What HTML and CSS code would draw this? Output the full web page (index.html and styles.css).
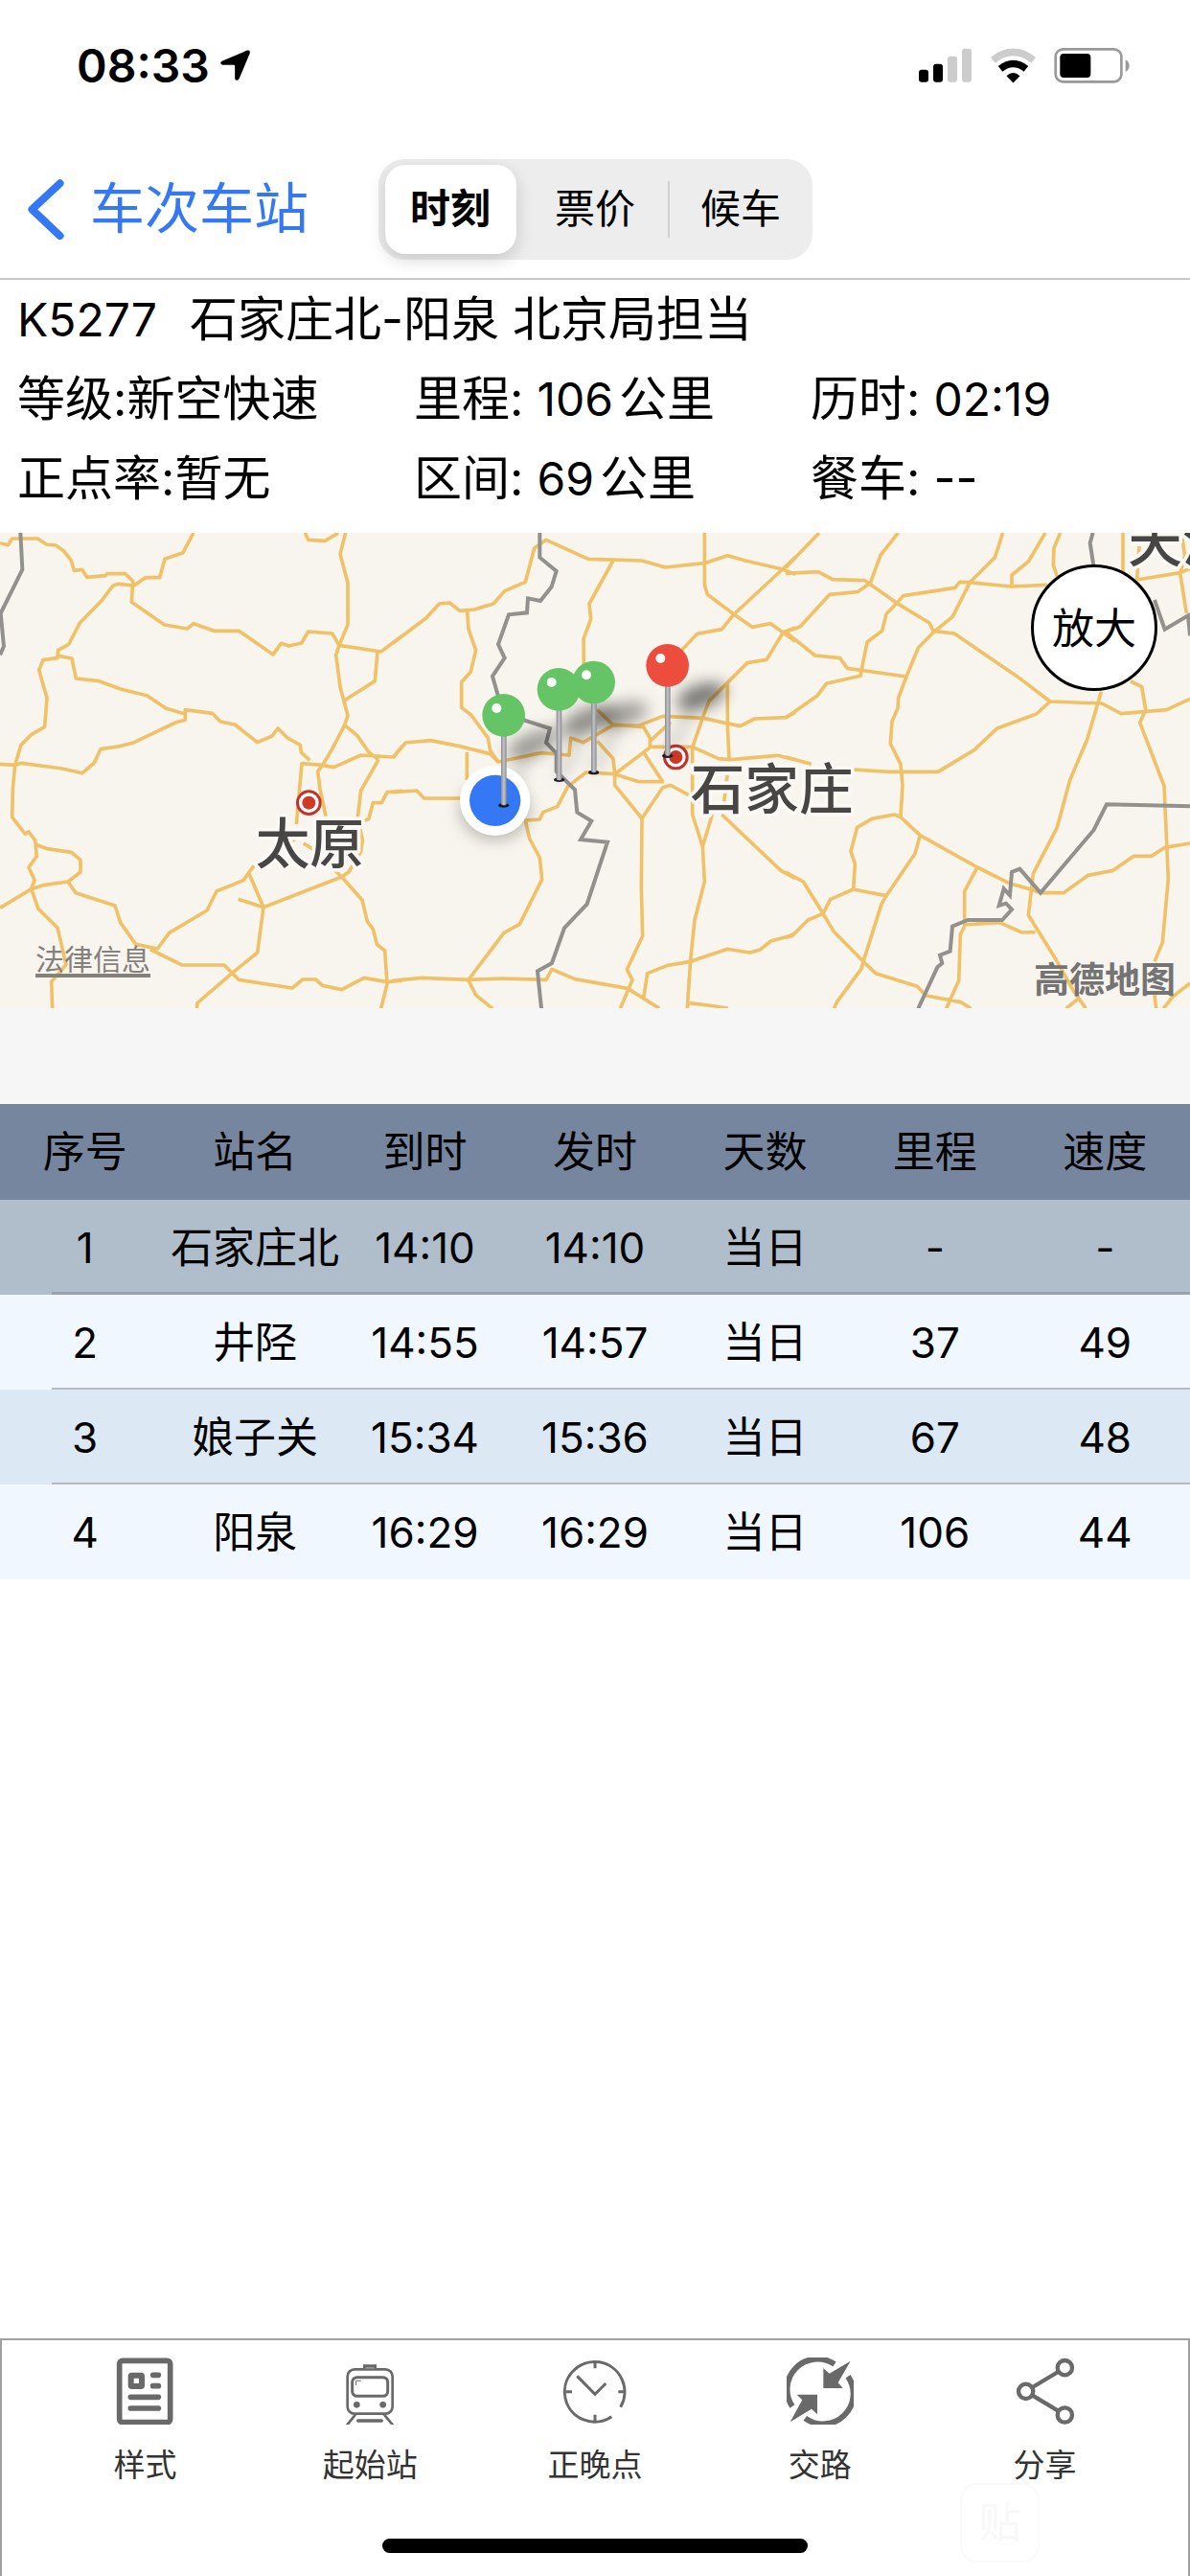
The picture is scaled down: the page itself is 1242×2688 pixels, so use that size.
FILE: index.html
```html
<!DOCTYPE HTML>
<html lang="zh-CN">
<head>
<meta charset="utf-8">
<meta name="viewport" content="width=device-width, initial-scale=1">
<title>K5277 石家庄北-阳泉</title>
<link rel="stylesheet" href="styles.css">
</head>

<body>
<div class="status">
	<span class="time">08:33</span>
	<svg class="loc" viewBox="686 60 100 102"><path d="M694 98L772 65Q785 61 782 74L749 153Q745 161 738 158Q735 156 735 151V113Q735 110 731 110H696Q689 109 690 103Q691 100 694 98Z"/></svg>
	<div class="status-right">
		<svg class="signal" viewBox="171 58 168 110">
			<rect x="171" y="126" width="30" height="39" rx="9"/>
			<rect x="216" y="108" width="30" height="57" rx="9"/>
			<rect x="261" y="84" width="30" height="81" rx="9" fill="#ccc"/>
			<rect x="306" y="60" width="30" height="105" rx="9" fill="#ccc"/>
		</svg>
		<svg class="wifi" viewBox="394 57 146 110">
			<path d="M404 95Q467 45 530 95" fill="none" stroke="#ccc" stroke-width="22"/>
			<path d="M427 122Q467 90 507 122" fill="none" stroke="#000" stroke-width="22"/>
			<path d="M446 144Q467 125 488 144L467 166Z"/>
		</svg>
		<svg class="battery" viewBox="597 57 240 112">
			<rect x="601" y="61" width="208" height="103" rx="24" fill="none" stroke="#999" stroke-width="8"/>
			<rect x="615" y="75" width="97" height="76" rx="12"/>
			<path d="M822 94Q834 100 834 113T822 132Z" fill="#999"/>
		</svg>
	</div>
</div>

<nav class="nav">
	<a class="back" href="#">
		<svg viewBox="88 468 114 190"><path d="M189 481L101 563L189 646"/></svg>
		<span>车次车站</span>
	</a>
	<div class="seg">
		<button class="on" type="button">时刻</button>
		<button type="button">票价</button>
		<button type="button">候车</button>
	</div>
</nav>

<main>
<div class="info">
	<p class="full"><span class="num no">K5277</span>石家庄北-阳泉 北京局担当</p>
	<p>等级:新空快速</p>
	<p>里程: <span class="num km">106</span>公里</p>
	<p>历时: <span class="num">02:19</span></p>
	<p>正点率:暂无</p>
	<p>区间: <span class="num km">69</span>公里</p>
	<p>餐车: --</p>
</div>

<div class="map">
	<svg class="tiles" viewBox="0 0 3726 1488" preserveAspectRatio="xMidYMid slice">
		<defs>
			<filter id="blur" x="-50%" y="-50%" width="200%" height="200%"><feGaussianBlur stdDeviation="24"/></filter>
			<linearGradient id="rod"><stop offset="0" stop-color="#8a8b8f"/><stop offset=".5" stop-color="#c3c4c8"/><stop offset="1" stop-color="#8a8b8f"/></linearGradient>
		</defs>

		<!-- 西 -->
		<g transform="translate(0 -18)">
			<g class="road">
				<path d="M0 50L25 56L38 36H118L145 54L175 57L200 75L222 103L232 136L257 133L272 157L330 152L335 146H392L415 168L420 183L455 158H500L516 100L573 80L606 18"/>
				<path d="M420 183L372 178L353 184L321 227L250 300L215 367L182 385L180 410L135 416L122 448L147 535L140 625L98 650L66 682L47 745L40 820L38 908L78 960L90 954L110 980L115 1030L90 1065L108 1105L98 1133L120 1195L180 1254L207 1370L161 1423L164 1507"/>
				<path d="M415 183L412 235L515 306L586 318L606 302L670 325H748L855 399L880 364L905 372L944 363L965 327L1040 333L1062 370L1193 390L1260 340"/>
				<path d="M182 403L225 411L238 474L310 482L380 508L460 527L520 568L580 585V604L550 612L415 676L370 687L315 695L295 738L258 770L195 756L150 750L68 739L47 745L0 742"/>
				<path d="M580 585V572L665 583L690 609L735 618L806 674L852 654L870 630L900 660L940 682L943 705L970 730"/>
				<path d="M955 18L965 40L1018 43L1060 18"/>
				<path d="M1082 18L1065 85L1089 175V305L1062 370L1052 400L1065 500L1089 590L1079 620L1040 695L1010 745L945 740L928 930"/>
				<path d="M1182 390L1174 482L1078 543M1079 620L1118 652L1155 705L1185 728M1010 745L1045 752L1130 714L1232 720L1260 685"/>
				<path d="M1185 728L1130 825L1120 910L1135 980L1130 1015L1092 1080L1070 1095L825 1190L746 1165M1140 918L1154 914L1168 863H1195L1212 830L1260 826"/>
				<path d="M1010 745L995 765L1002 820L1020 905M910 985L935 970M950 990L975 1005L1070 1095L1134 1168L1150 1235L1168 1258L1180 1306L1205 1326L1212 1430L1193 1507"/>
				<path d="M110 993L148 1007L224 1018L252 1042V1080L213 1110L135 1121L98 1133L0 1192"/>
				<path d="M213 1110L237 1145L360 1185L377 1238L425 1306L493 1320L530 1270L648 1200L678 1140L762 1106L795 1060M780 1085L825 1190L806 1332L727 1396L618 1490L616 1507"/>
				<path d="M470 1322L570 1371H702L748 1417L915 1443L948 1416H988L1010 1435L1070 1448L1140 1411L1212 1424L1260 1419"/>
			</g>
			<path class="edge" d="M64 18L70 133L2 270L12 373L0 400"/>
		</g>

		<!-- 中 -->
		<g transform="translate(1230 -18)">
			<g class="road">
				<path d="M0 363L104 285L145 240L178 237L210 262L255 258L315 240L350 200L415 172L443 66L480 40L612 100L780 105L853 126L975 113L1048 89L1100 104L1220 132L1260 148"/>
				<path d="M233 262L237 320L260 385L244 453L215 485V565L245 588L298 660L305 700L330 735"/>
				<path d="M690 105L648 180L615 240L620 288L597 350L598 430"/>
				<path d="M976 18V180L985 211L1068 273L1125 313L1183 302L1260 358M1260 95L1220 132L1068 273L1030 320L953 334L905 385"/>
				<path d="M1260 315L1222 330L1170 415L1110 425L1050 485L990 545L970 597L938 690"/>
				<path d="M0 722L40 675L118 668L205 685L305 710L330 735L465 707L552 714L557 660L597 674L690 620L640 572M690 618L785 626L805 660V690M690 620L768 622L845 592L972 598L1088 623L1133 600L1230 596L1260 580M870 610L805 670"/>
				<path d="M232 705V792M0 830L75 825L98 849H215"/>
				<path d="M1048 485V620L1053 728M805 688H938L1020 725L1053 728L1205 715L1260 728"/>
				<path d="M805 690L695 773L605 768L548 812L515 875L470 893L460 915L415 918L428 975L460 1035L467 1103L397 1243L348 1270L236 1418L260 1465L312 1507"/>
				<path d="M640 670L690 725L695 773L770 797H845L785 705M695 773V808L780 912L845 815L870 808L965 860"/>
				<path d="M780 912L778 1130L782 1280L733 1385L750 1418L712 1507"/>
				<path d="M938 690V900L970 1000L976 1110L945 1230L932 1355L922 1507M1000 900L970 1000M1048 770L1037 860M1030 900L1215 1075L1260 1100"/>
				<path d="M0 1420L90 1411L237 1417L340 1413L480 1417L498 1384L570 1415L735 1444L835 1507M785 1475L797 1397L860 1372L932 1360L1048 1321L1118 1332L1150 1323L1185 1295L1240 1281L1260 1270M928 1490L1010 1500L1050 1507"/>
			</g>
			<path class="edge" d="M460 18V95L512 138L497 187L462 231L423 223L420 268L363 274L330 367L350 410L312 467L330 530L413 605L492 630L480 675L512 708V765L570 822L577 893L622 920L588 978L672 986L608 1180L537 1255L498 1365L453 1390L465 1507"/>
		</g>

		<!-- 东 -->
		<g transform="translate(2460 -18)">
			<g class="road">
				<path d="M0 127L105 18M0 145L102 140L147 164L248 167L348 238L450 300L462 325L528 333L735 475L828 546L990 552L1050 584L1193 572L1266 538"/>
				<path d="M352 18L297 88L265 175L225 203L138 211L45 312L0 328L92 402L170 410L193 442L378 468"/>
				<path d="M0 597L100 527L127 490L234 466L255 360L302 325L315 272L348 238L368 215L530 190L545 172L577 173L705 186L820 181"/>
				<path d="M680 18L655 95L577 173L523 280L462 330L415 378L378 468L353 535L351 567L333 608L328 678L360 742L366 808L360 908L421 965L600 1065L700 1115L770 1135L798 1145H870L947 1090L1025 1075L1090 1030H1145L1187 1003L1266 990"/>
				<path d="M813 18L760 108L708 150V190M860 18L840 65L838 118L850 155M1056 18V140M1100 165L1235 143L1266 130M1107 60L1100 165M1235 145L1255 270M1240 25L1250 90L1235 145"/>
				<path d="M0 720L80 742M210 759L325 766H477L590 698L662 630L785 585L828 546"/>
				<path d="M988 515L945 662L890 792L850 940L775 1085L760 1215L850 1360M1080 483L1115 500L1127 572L1109 612L1185 810L1198 1100L1180 1300L1155 1360M1155 1465L1160 1507M1183 1507L1212 1470L1266 1428"/>
				<path d="M360 908L340 900L270 913L224 940L204 1015L217 1055L212 1134L315 1154M212 1134L140 1165L117 1210L70 1230L20 1280L0 1284M421 965L405 1022L315 1154L300 1180L243 1360L237 1383L160 1487L152 1507"/>
				<path d="M0 1080L55 1110L117 1210L150 1265L243 1360L282 1397L412 1438L440 1467L548 1487L580 1507M600 1065L560 1140V1245L670 1238L740 1269L782 1268M560 1250L547 1275L542 1420L503 1507"/>
				<path d="M850 1360L900 1450L940 1507M918 1475L878 1507"/>
			</g>
			<path class="edge" d="M962 18L953 50L964 120M1155 228L1187 320L1260 277L1266 340M1266 874L1005 868L965 948L798 1145L733 1070L708 1080L702 1153L683 1132L668 1185L690 1178L708 1197L678 1230H570L522 1250L515 1328L483 1340L490 1365L475 1378L415 1507"/>
		</g>

		<g class="city">
			<circle cx="967" cy="845" r="40" fill="#c2342b"/><circle cx="967" cy="845" r="31" fill="#fff"/><circle cx="967" cy="845" r="21" fill="#d03a26"/>
			<circle cx="2116" cy="702" r="40" fill="#c2342b"/><circle cx="2116" cy="702" r="31" fill="#fff"/><circle cx="2116" cy="702" r="21" fill="#d03a26"/>
			<text x="800" y="1035">太原</text>
			<text x="2162" y="864">石家庄</text>
			<text x="3532" y="90">天津</text>
		</g>

		<!-- 大头针 -->
		<g transform="translate(1230 -18)">
			<g fill="#000" filter="url(#blur)">
				<ellipse cx="320" cy="885" rx="110" ry="95" opacity=".25"/>
				<ellipse cx="440" cy="678" rx="90" ry="36" opacity=".35" transform="rotate(-22 440 678)"/>
				<ellipse cx="610" cy="604" rx="90" ry="38" opacity=".4" transform="rotate(-22 610 604)"/>
				<ellipse cx="720" cy="586" rx="80" ry="36" opacity=".35" transform="rotate(-15 720 586)"/>
				<ellipse cx="965" cy="530" rx="80" ry="38" opacity=".5" transform="rotate(-18 965 530)"/>
				<path d="M350 866L430 690M522 786L600 620M630 764L710 600M862 710L940 560" stroke="#000" stroke-width="34" opacity=".14"/>
			</g>
			<circle cx="320" cy="856" r="110" fill="#fff"/><circle cx="320" cy="856" r="80" fill="#3478f6"/>
			<g fill="#1c1c20">
				<ellipse cx="860" cy="716" rx="17" ry="7"/><ellipse cx="629" cy="768" rx="17" ry="7"/><ellipse cx="521" cy="791" rx="17" ry="7"/><ellipse cx="347" cy="871" rx="17" ry="7"/>
			</g>
			<g fill="url(#rod)">
				<rect x="852" y="490" width="17" height="226" rx="6"/><rect x="621" y="540" width="17" height="228" rx="6"/><rect x="512" y="565" width="17" height="228" rx="6"/><rect x="339" y="645" width="17" height="226" rx="6"/>
			</g>
			<circle cx="860" cy="433" r="67" fill="#ec4d3d"/>
			<g fill="#65c466"><circle cx="629" cy="486" r="67"/><circle cx="519" cy="508" r="67"/><circle cx="347" cy="589" r="67"/></g>
			<g fill="#fff"><circle cx="838" cy="411" r="15"/><circle cx="606" cy="463" r="15"/><circle cx="497" cy="486" r="15"/><circle cx="325" cy="567" r="15"/></g>
		</g>
	</svg>
	<button class="zoom" type="button">放大</button>
	<a class="legal" href="#">法律信息</a>
	<span class="amap">高德地图</span>
</div>

<table class="stops">
	<thead>
		<tr><th>序号</th><th>站名</th><th>到时</th><th>发时</th><th>天数</th><th>里程</th><th>速度</th></tr>
	</thead>
	<tbody>
		<tr class="cur"><td>1</td><td>石家庄北</td><td>14:10</td><td>14:10</td><td>当日</td><td>-</td><td>-</td></tr>
		<tr><td>2</td><td>井陉</td><td>14:55</td><td>14:57</td><td>当日</td><td>37</td><td>49</td></tr>
		<tr class="odd"><td>3</td><td>娘子关</td><td>15:34</td><td>15:36</td><td>当日</td><td>67</td><td>48</td></tr>
		<tr><td>4</td><td>阳泉</td><td>16:29</td><td>16:29</td><td>当日</td><td>106</td><td>44</td></tr>
	</tbody>
</table>
</main>

<footer class="tabs">
	<div class="tab-list">
		<button type="button">
			<svg viewBox="53 61 210 210">
				<rect x="79" y="71" width="159" height="193" rx="10" stroke-width="17"/>
				<rect x="115" y="117" width="34" height="34" rx="3" stroke-width="18"/>
				<path d="M184 116H201M184 150H201M114 185H201M114 220H201" stroke-width="17" stroke-linecap="round"/>
			</svg>
			样式
		</button>
		<button type="button">
			<svg viewBox="758 61 210 210" stroke-width="8">
				<rect x="793" y="98" width="141" height="139" rx="22"/>
				<rect x="808" y="123" width="111" height="59" rx="15" stroke-width="9"/>
				<path d="M820 148V134H835" stroke-width="3"/>
				<path d="M846 96V87H880V96" fill="#999"/>
				<circle cx="822" cy="209" r="10" class="dot"/><circle cx="904" cy="209" r="10" class="dot"/>
				<path d="M818 240L791 273M908 240L935 273"/>
				<path d="M826 259H900" stroke-width="10" stroke-linecap="round"/>
			</svg>
			起始站
		</button>
		<button type="button">
			<svg viewBox="83 61 210 210" stroke-width="9">
				<path d="M240 246A94 94 0 1 1 268 216"/>
				<path d="M188 75V95M188 240V260M96 168H116M261 168H281M132 119L188 176L222 142"/>
			</svg>
			正晚点
		</button>
		<button type="button">
			<svg viewBox="788 61 210 210" stroke-width="18">
				<path d="M938 82A95 95 0 0 0 806 214M846 251A95 95 0 0 0 980 120"/>
				<path class="dot" d="M988 72L949 140L964 157H903V95L922 111ZM799 263L837 194L820 177H884V239L866 222Z"/>
			</svg>
			交路
		</button>
		<button type="button">
			<svg viewBox="0 0 210 210" stroke-width="13">
				<circle cx="166" cy="32" r="23"/><circle cx="44" cy="106" r="23"/><circle cx="166" cy="180" r="23"/>
				<path d="M65 93L145 45M65 119L145 167"/>
			</svg>
			分享
		</button>
	</div>
	<span class="mark">贴</span>
	<div class="home"></div>
</footer>
</body>
</html>
```
FILE: styles.css
```css
*{
	box-sizing: border-box;
}
body{
	display: flex;
	flex-direction: column;
	min-height: 100vh;
	margin: 0;
	background: #fff;
	color: #000;
	font-family: Inter, "Noto Sans CJK SC", sans-serif;
}
button{
	padding: 0;
	border: 0;
	background: none;
	color: inherit;
	font-family: inherit;
}
svg{
	display: block;
}

.status{
	display: flex;
	align-items: center;
	height: 132px;
	padding: 4px 62px 0 80px;
}
.time{
	font-size: 48px;
	font-weight: 600;
}
.loc{
	width: 33px;
	height: 34px;
	margin-left: 10px;
}
.status-right{
	display: flex;
	gap: 18px;
	margin-left: auto;
}
.signal{
	width: 56px;
	height: 37px;
}
.wifi{
	width: 49px;
	height: 37px;
}
.battery{
	width: 80px;
	height: 37px;
}

.nav{
	display: grid;
	grid-template-columns: 1fr auto 1fr;
	align-items: center;
	height: 160px;
	padding-top: 14px;
	border-bottom: 2px solid #c8c8c8;
}
.back{
	display: flex;
	align-items: center;
	gap: 27px;
	padding-left: 29px;
	color: #3478f6;
	font-size: 57px;
	line-height: 64px;
	text-decoration: none;
}
.back svg{
	width: 38px;
	height: 63px;
}
.back path{
	fill: none;
	stroke: #3478f6;
	stroke-width: 24;
	stroke-linecap: round;
	stroke-linejoin: round;
}
.seg{
	display: grid;
	grid-template-columns: repeat(3, 151px);
	grid-template-rows: 100%;
	height: 105px;
	padding: 6px 0;
	border-radius: 27px;
	background: #ededee;
}
.seg button{
	margin: 0 7px;
	border-radius: 21px;
	font-size: 42px;
	font-weight: 400;
	line-height: 50px;
}
.seg .on{
	background: #fff;
	box-shadow: 0 6px 18px rgba(0,0,0,.16);
	font-weight: 700;
}
.seg button:last-child{
	margin: 17px 0;
	border-left: 2px solid #d0d0d2;
	border-radius: 0;
}

main{
	flex: 1;
}
.info{
	display: grid;
	grid-template-columns: repeat(3, 1fr);
	padding-bottom: 15px;
	font-size: 50px;
	line-height: 83px;
}
.info p{
	margin: 0;
	padding-left: 18px;
	white-space: nowrap;
}
.info .full{
	grid-column: 1 / -1;
}
.num{
	font-size: 48px;
}
.no{
	margin-right: 34px;
}
.km{
	margin-right: 6px;
}

.map{
	position: relative;
	height: 496px;
	overflow: hidden;
	background: #f8f5ee;
}
.tiles{
	width: 100%;
	height: 100%;
}
.road{
	fill: none;
	stroke: #f1c167;
	stroke-width: 11;
	stroke-linejoin: round;
}
.edge{
	fill: none;
	stroke: #92918e;
	stroke-width: 12;
}
.city text{
	fill: #484645;
	stroke: #fbf9f5;
	stroke-width: 22;
	stroke-linejoin: round;
	paint-order: stroke;
	font-size: 170px;
	font-weight: 500;
}
.zoom{
	position: absolute;
	top: 33px;
	right: 34px;
	width: 132px;
	height: 132px;
	padding-bottom: 4px;
	border: 3px solid #000;
	border-radius: 50%;
	background: #fff;
	font-size: 44px;
}
.legal{
	position: absolute;
	left: 37px;
	bottom: 32px;
	border-bottom: 4px solid #84817c;
	color: #84817c;
	font-size: 30px;
	line-height: 30px;
	text-decoration: none;
}
.amap{
	position: absolute;
	right: 15px;
	bottom: 9px;
	color: #747474;
	font-size: 37px;
	font-weight: 700;
	line-height: 40px;
}

.stops{
	width: 100%;
	border-top: 100px solid #f6f6f6;
	border-spacing: 0;
	table-layout: fixed;
	font-size: 44px;
	line-height: 50px;
	text-align: center;
}
.stops th, .stops td{
	height: 99px;
	padding: 0;
	font-weight: 400;
	white-space: nowrap;
}
.stops th{
	height: 100px;
	background: #76869f;
}
.stops tbody tr{
	background: linear-gradient(#b4bbc4, #b4bbc4) 54px 100% / 100% 2px no-repeat #f0f7ff;
}
.stops tbody .odd{
	background-color: #dce8f4;
}
.stops tbody .cur{
	background: linear-gradient(#9a9fae, #9a9fae) 54px 100% / 100% 3px no-repeat #b0bdcb;
}
.stops tbody tr:last-child{
	background: #f0f7ff;
}

.tabs{
	position: relative;
	height: 248px;
	padding: 18px 32px 0;
	border: 2px solid #a0a0a0;
	border-bottom: 0;
}
.tab-list{
	display: grid;
	grid-template-columns: repeat(5, 1fr);
}
.tabs button{
	display: flex;
	flex-direction: column;
	align-items: center;
	gap: 22px;
	color: #333;
	font-size: 33px;
	line-height: 40px;
}
.tabs svg{
	width: 70px;
	height: 70px;
	fill: none;
	stroke: #696969;
}
.tabs .dot{
	fill: #696969;
	stroke: none;
}
.mark{
	position: absolute;
	right: 155px;
	bottom: 14px;
	width: 83px;
	height: 83px;
	border: 2px solid #fafafa;
	border-radius: 18px;
	color: #f8f8f8;
	font-size: 44px;
	line-height: 78px;
	text-align: center;
}
.home{
	position: absolute;
	left: 50%;
	bottom: 24px;
	width: 444px;
	height: 15px;
	margin-left: -222px;
	border-radius: 8px;
	background: #000;
}
```
